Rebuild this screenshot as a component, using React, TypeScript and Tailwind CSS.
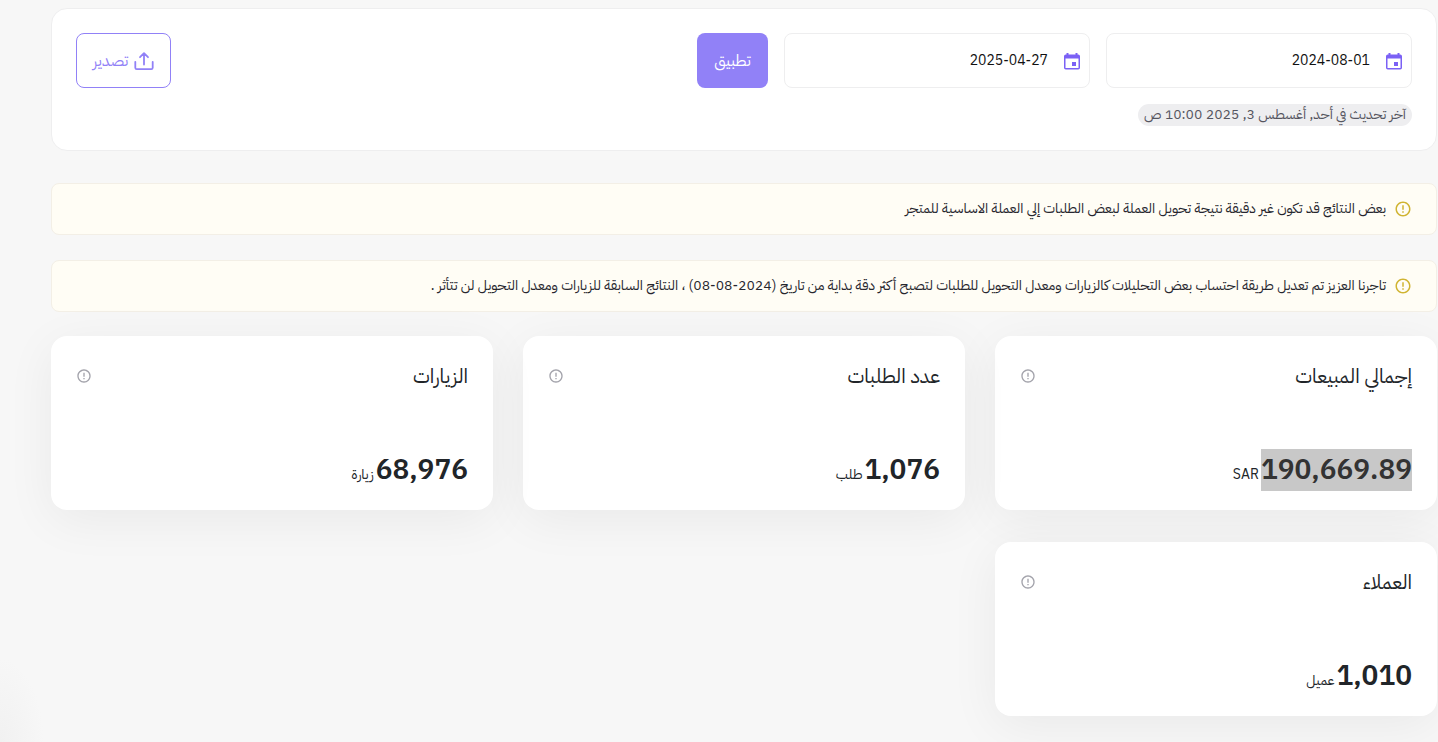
import React, { useState } from 'react';

function CalendarIcon() {
  return (
    <svg viewBox="0 0 16 18" className="h-[18px] w-4 shrink-0" fill="#7b61f5" aria-hidden="true">
      <path fillRule="evenodd" d="M2.5 1h2v1.500h7V1h2v1.500h.7A1.800 1.800 0 0 1 16 4.300v11.400a1.800 1.800 0 0 1-1.800 1.800H1.800A1.800 1.800 0 0 1 0 15.700V4.300A1.800 1.800 0 0 1 1.800 2.500h.7V1ZM1.500 6.500V16h13V6.500h-13Z" />
      <path d="M8 10h4v4H8z" />
    </svg>
  );
}

function UploadIcon() {
  return (
    <svg viewBox="0 0 20 20" className="size-5 shrink-0" fill="none" stroke="currentColor" strokeWidth="1.8" strokeLinecap="round" strokeLinejoin="round" aria-hidden="true">
      <path d="M10 13.500V2.500M6 6.200l4-4 4 4M1.300 10.800v5.900a1.500 1.500 0 0 0 1.500 1.500h14.400a1.500 1.500 0 0 0 1.500-1.500v-5.900" />
    </svg>
  );
}

function AlertIcon({ className }: { className: string }) {
  return (
    <svg viewBox="0 0 24 24" className={className} fill="currentColor" aria-hidden="true">
      <path d="M11 15h2v2h-2zm0-8h2v6h-2zm.99-5C6.470 2 2 6.480 2 12s4.470 10 9.990 10C17.520 22 22 17.520 22 12S17.520 2 11.990 2zM12 20c-4.420 0-8-3.580-8-8s3.580-8 8-8 8 3.580 8 8-3.580 8-8 8z" />
    </svg>
  );
}

function DateField({ label, initial }: { label: string; initial: string }) {
  const [value, setValue] = useState(initial);
  return (
    <label className="flex h-[55px] min-w-0 max-w-[306px] flex-1 items-center gap-4 rounded-lg border border-[#eeeeef] bg-white px-[9px]">
      <CalendarIcon />
      <input
        type="text"
        aria-label={label}
        value={value}
        onChange={(e) => setValue(e.target.value)}
        className="w-full min-w-0 bg-transparent text-right text-sm text-[#111] outline-none"
      />
    </label>
  );
}

function Notice({ children }: { children: React.ReactNode }) {
  return (
    <div role="note" className="flex min-h-[52px] items-center gap-2 rounded-lg border border-[#f3efe6] bg-[#fffdf5] px-6 text-sm text-[#26262e]">
      <AlertIcon className="size-[18px] shrink-0 text-[#d0b432]" />
      <p>{children}</p>
    </div>
  );
}

type Stat = { title: string; value: string; unit: string; selected?: boolean };

const stats: Stat[] = [
  { title: 'إجمالي المبيعات', value: '190,669.89', unit: 'SAR', selected: true },
  { title: 'عدد الطلبات', value: '1,076', unit: 'طلب' },
  { title: 'الزيارات', value: '68,976', unit: 'زيارة' },
  { title: 'العملاء', value: '1,010', unit: 'عميل' },
];

function StatCard({ title, value, unit, selected }: Stat) {
  return (
    <section className="flex min-h-[174px] flex-col justify-between rounded-2xl bg-white px-[25px] pt-6 pb-[19px] shadow-[0_10px_50px_rgba(0,0,0,0.06)]">
      <div className="flex items-center justify-between">
        <h2 className="text-xl leading-8 text-[#212529]">{title}</h2>
        <button type="button" aria-label={title} className="text-[#a3a3ab]">
          <AlertIcon className="size-4" />
        </button>
      </div>
      <div className="flex items-baseline gap-0.5">
        <span className={selected ? 'bg-[#c8c8c8] text-[28px] leading-[42px] font-semibold text-[#333]' : 'text-[28px] leading-[42px] font-semibold text-[#212529]'}>{value}</span>
        <span className="text-sm text-[#212529]">{unit}</span>
      </div>
    </section>
  );
}

export default function App() {
  return (
    <main dir="rtl" className="min-h-screen bg-[#f7f7f7] bg-[radial-gradient(44px_84px_at_0_100%,#f1f1f1,#f7f7f7)] pt-2 pr-px pb-6 pl-[51px] font-['IBM_Plex_Sans_Arabic','Noto_Sans','DejaVu_Sans',sans-serif]">
      <header className="rounded-2xl border border-[#eeeeef] bg-white p-6">
        <div className="flex items-center gap-4">
          <DateField label="من تاريخ" initial="2024-08-01" />
          <DateField label="إلى تاريخ" initial="2025-04-27" />
          <button type="button" className="h-[55px] w-[71px] shrink-0 rounded-lg bg-[#9181f7] text-base text-white">تطبيق</button>
          <button type="button" className="ms-auto flex h-[55px] w-[95px] shrink-0 items-center justify-center gap-1.5 rounded-lg border border-[#9181f7] text-base text-[#9181f7]">
            <UploadIcon />
            تصدير
          </button>
        </div>
        <div className="mt-4 flex">
          <p className="rounded-full bg-[#eeeef0] px-1.5 text-sm leading-[22px] text-[#55555f]">آخر تحديث في أحد, أغسطس 3, 2025 10:00 ص</p>
        </div>
      </header>
      <div className="mt-8 flex flex-col gap-[25px]">
        <Notice>بعض النتائج قد تكون غير دقيقة نتيجة تحويل العملة لبعض الطلبات إلي العملة الاساسية للمتجر</Notice>
        <Notice>تاجرنا العزيز تم تعديل طريقة احتساب بعض التحليلات كالزيارات ومعدل التحويل للطلبات لتصبح أكثر دقة بداية من تاريخ (2024-08-08) ، النتائج السابقة للزيارات ومعدل التحويل لن تتأثر .</Notice>
      </div>
      <div className="mt-6 grid grid-cols-3 gap-x-[30px] gap-y-8">
        {stats.map((s) => (
          <StatCard key={s.title} {...s} />
        ))}
      </div>
    </main>
  );
}
